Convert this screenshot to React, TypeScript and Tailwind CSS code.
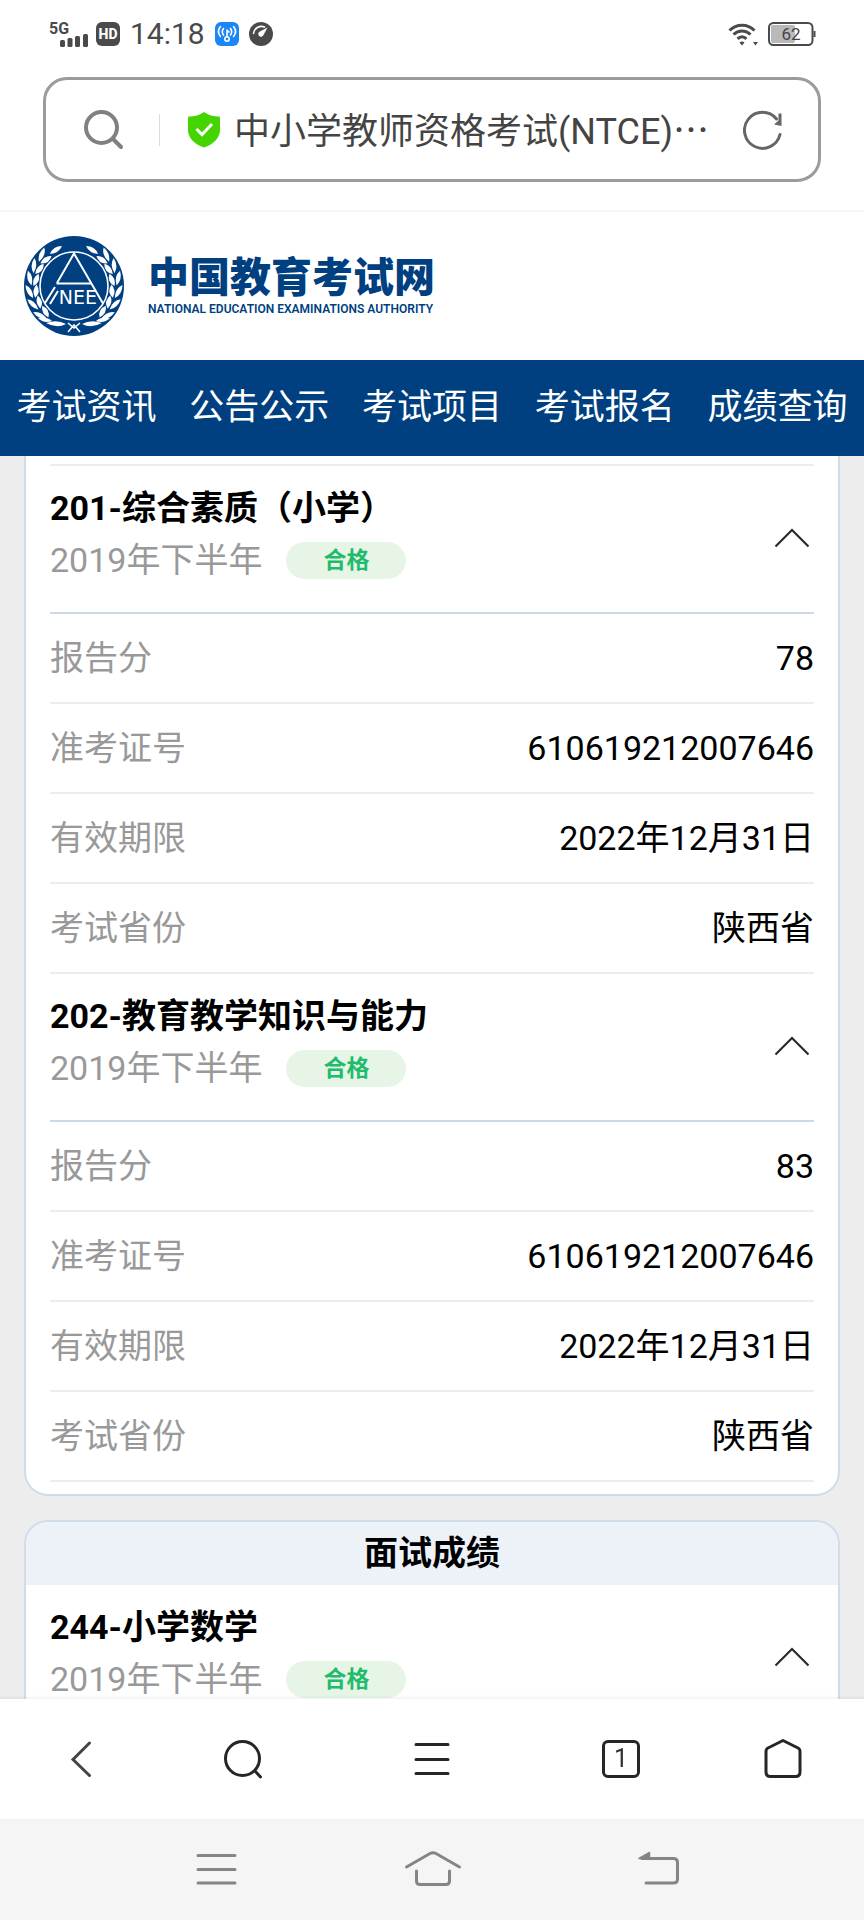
import { useState } from 'react';

interface Score {
  title: string;
  term: string;
  status: string;
  rows: { label: string; value: string }[];
}

const navItems = ['考试资讯', '公告公示', '考试项目', '考试报名', '成绩查询'];

const writtenScores: Score[] = [
  {
    title: '201-综合素质（小学）',
    term: '2019年下半年',
    status: '合格',
    rows: [
      { label: '报告分', value: '78' },
      { label: '准考证号', value: '610619212007646' },
      { label: '有效期限', value: '2022年12月31日' },
      { label: '考试省份', value: '陕西省' },
    ],
  },
  {
    title: '202-教育教学知识与能力',
    term: '2019年下半年',
    status: '合格',
    rows: [
      { label: '报告分', value: '83' },
      { label: '准考证号', value: '610619212007646' },
      { label: '有效期限', value: '2022年12月31日' },
      { label: '考试省份', value: '陕西省' },
    ],
  },
];

const interviewScores: Score[] = [
  { title: '244-小学数学', term: '2019年下半年', status: '合格', rows: [] },
];

const StatusBar = () => (
  <div className="flex h-[68px] shrink-0 items-center justify-between pl-[50px] pr-12 text-[#4a4a4a]">
    <div className="flex items-center gap-[10px]">
      <svg width="36" height="28" viewBox="0 0 36 28" className="overflow-visible" fill="currentColor">
        <text x="-1" y="14" fontSize="16" fontWeight="700" fontFamily="Roboto, sans-serif">5G</text>
        <rect x="10" y="20" width="5" height="7" rx="1.5" />
        <rect x="17.500" y="18" width="5" height="9" rx="1.5" />
        <rect x="25" y="16" width="5" height="11" rx="1.5" />
        <rect x="33" y="14" width="5" height="13" rx="1.5" />
      </svg>
      <svg width="24" height="24" viewBox="0 0 24 24">
        <rect width="24" height="24" rx="6" fill="#4a4a4a" />
        <text x="12" y="17" textAnchor="middle" fontSize="14" fontWeight="800" fontFamily="Roboto, sans-serif" fill="#fff">HD</text>
      </svg>
      <span className="text-[30px] leading-8">14:18</span>
      <svg width="24" height="24" viewBox="0 0 24 24" fill="none" stroke="#fff" strokeWidth="1.6" strokeLinecap="round">
        <rect width="24" height="24" rx="6" fill="#1b86f5" stroke="none" />
        <path d="M5.500 4.500c-2.500 3-2.500 7 0 10M18.500 4.500c2.500 3 2.500 7 0 10M8.500 6.500c-1.500 2-1.500 4.500 0 6.500M15.500 6.500c1.500 2 1.500 4.500 0 6.500M12 8v7M12 8.500l2 1.500" />
        <circle cx="12" cy="17" r="2.200" />
      </svg>
      <svg width="24" height="24" viewBox="0 0 24 24">
        <circle cx="12" cy="12" r="12" fill="#4a4a4a" />
        <path d="M4.500 11.500A8 8 0 0 1 15.500 5" fill="none" stroke="#fff" strokeWidth="1.600" strokeLinecap="round" />
        <path d="M18.500 5.500 14.500 13a2.700 2.700 0 1 1-3.600-3.400z" fill="#fff" />
      </svg>
    </div>
    <div className="flex items-center gap-[10px]">
      <svg width="30" height="24" viewBox="0 0 30 24" fill="none" stroke="currentColor" strokeWidth="3">
        <path d="M1.500 8.500C8.500 1.500 19.500 1.500 26.500 8.500M5.500 12.500c5-4.700 12-4.700 17 0M9.500 16.800c2.800-2.600 6.200-2.600 9 0" />
        <path d="M11.500 20.500c1.500-1.300 3.500-1.300 5 0L14 23.500zM25 20h5l-2.500 3.500z" fill="currentColor" stroke="none" />
      </svg>
      <svg width="48" height="24" viewBox="0 0 48 24">
        <rect x="1" y="1" width="43.500" height="22" rx="4.500" fill="none" stroke="#4a4a4a" strokeWidth="2" />
        <rect x="3" y="3" width="24" height="18" rx="2" fill="#b9b9b9" />
        <path d="M45.500 9h2v6h-2z" fill="#4a4a4a" />
        <text x="23" y="18" textAnchor="middle" fontSize="17" fontFamily="Roboto, sans-serif" fill="#444">62</text>
      </svg>
    </div>
  </div>
);

const AddressBar = () => (
  <div className="shrink-0 border-b-2 border-[#f6f6f6] px-[43px] pb-7 pt-[9px]">
    <div className="flex h-[105px] items-center rounded-[24px] border-[3px] border-[#9b9b9b] pl-[38px] pr-9">
      <button type="button" aria-label="搜索">
        <svg width="40" height="40" viewBox="0 0 40 40" fill="none" stroke="#808080" strokeWidth="4" strokeLinecap="round">
          <circle cx="17.500" cy="17.500" r="15.500" />
          <path d="M29 29l8 8" />
        </svg>
      </button>
      <span className="ml-[35px] h-8 w-px bg-[#dcdcdc]" />
      <svg className="ml-7 shrink-0" width="32" height="36" viewBox="0 0 32 36">
        <path d="M16 0c4 3 9.500 4.500 15 4.500Q32 4.500 32 6v12c0 8-7 14.500-16 17.500C7 32.500 0 26 0 18V6q0-1.500 1-1.500C6.500 4.500 12 3 16 0z" fill="#44d500" />
        <path d="M8.500 17l5.500 5.500L24 12" fill="none" stroke="#fff" strokeWidth="3" />
      </svg>
      <button type="button" className="ml-[14px] flex-1 whitespace-nowrap text-left text-[36px] leading-[52px] text-[#444]">
        中小学教师资格考试(NTCE)<span className="font-['Noto_Sans_CJK_SC']">…</span>
      </button>
      <button type="button" aria-label="刷新">
        <svg width="39" height="40" viewBox="0 0 39 40" fill="none" stroke="#666" strokeWidth="3">
          <path d="M37 24.500A18 18 0 1 1 33.500 9" strokeLinecap="round" />
          <path d="M35.500 3.500h3V16l-7.500-1.500 4.500-4z" fill="#666" stroke="none" />
        </svg>
      </button>
    </div>
  </div>
);

// one laurel branch, drawn for the left side and mirrored for the right
const Branch = () => (
  <g fill="#fff">
    {[-46, -63, -80, -97, -114, -131].map((a) => (
      <g key={a} transform={`rotate(${a} 50 50)`}>
        <path d="M43 8q5-7 14-6-4 7-14 6z" />
        <path d="M43 10q8-3 13 3-8 4-13-3z" />
      </g>
    ))}
    <path d="M26 18q3-8 12-8-3 7-12 8zM22 87q11-4 20 1-9 5-20-1zM14 82q9-2 14 3-8 3-14-3z" />
  </g>
);

const Emblem = () => (
  <svg width="100" height="100" viewBox="0 0 100 100" className="shrink-0">
    <circle cx="50" cy="50" r="50" fill="#003f80" />
    <Branch />
    <g transform="translate(100 0) scale(-1 1)">
      <Branch />
    </g>
    <circle cx="50" cy="50" r="34" fill="#003f80" stroke="#fff" strokeWidth="1.600" />
    <g fill="none" stroke="#fff" strokeWidth="2">
      <path d="M21 67 31 51M33 47 50 17.500 79 67.500M32.500 47.500H68M26 68l8-13" />
      <path d="M44 96l6-7 6 7M44 87l6 5 6-5" strokeWidth="1.500" />
    </g>
    <text x="73" y="68" textAnchor="end" fontSize="19" fontFamily="DejaVu Sans, sans-serif" fill="#fff">NEE</text>
  </svg>
);

const SiteHeader = () => (
  <header className="shrink-0">
    <a href="#" className="flex h-[148px] items-center gap-6 pl-6 text-[#003f80]">
      <Emblem />
      <span>
        <span className="block text-[41px] font-black leading-[46px]">中国教育考试网</span>
        <span className="block whitespace-nowrap text-[12px] font-semibold leading-4">
          NATIONAL EDUCATION EXAMINATIONS AUTHORITY
        </span>
      </span>
    </a>
    <nav className="grid h-24 grid-cols-5 items-center bg-[#003f80] text-center text-[35px] leading-[52px] text-white">
      {navItems.map((item) => (
        <a key={item} href="#" className="whitespace-nowrap">{item}</a>
      ))}
    </nav>
  </header>
);

const ScoreBlock = ({ score }: { score: Score }) => {
  const [open, setOpen] = useState(true);

  return (
    <section>
      <div className="flex items-center justify-between border-b-2 border-[#ccd9e5] pb-[26px] pt-4">
        <div>
          <h3 className="text-[34px] font-bold leading-[52px]">{score.title}</h3>
          <div className="flex h-[52px] items-center">
            <span className="text-[34px] text-[#999]">{score.term}</span>
            <span className="ml-6 w-[120px] rounded-full bg-[#e7f5e7] text-center text-[23px] font-bold leading-[37px] text-[#21bb6c]">
              {score.status}
            </span>
          </div>
        </div>
        <button type="button" aria-label="展开或收起" aria-expanded={open} onClick={() => setOpen(!open)} className="mr-1 pt-2">
          <svg width="36" height="20" viewBox="0 0 36 20" fill="none" stroke="#2b2b2b" strokeWidth="2.200" className={open ? '' : 'rotate-180'}>
            <path d="M1.500 18.500 18 2l16.500 16.500" />
          </svg>
        </button>
      </div>
      {open && (
        <dl>
          {score.rows.map((row) => (
            <div key={row.label} className="flex justify-between border-b-2 border-[#ececec] py-[18px] text-[34px] leading-[52px]">
              <dt className="text-[#999]">{row.label}</dt>
              <dd>{row.value}</dd>
            </div>
          ))}
        </dl>
      )}
    </section>
  );
};

const BrowserBar = () => (
  <div className="relative grid h-[120px] shrink-0 grid-cols-[3fr_3fr_4fr_3fr_3fr] place-items-center bg-white shadow-[0_-1px_4px_rgba(0,0,0,0.08)]">
    <button type="button" aria-label="后退">
      <svg width="40" height="40" viewBox="0 0 40 40" fill="none" stroke="#444" strokeWidth="3" strokeLinecap="round">
        <path d="M28.500 4 12 20.500 28.500 36.500" />
      </svg>
    </button>
    <button type="button" aria-label="搜索">
      <svg width="40" height="40" viewBox="0 0 40 40" fill="none" stroke="#262626" strokeWidth="3" strokeLinecap="round">
        <circle cx="19.500" cy="19.500" r="17" />
        <path d="M32 32l5.500 6" />
      </svg>
    </button>
    <button type="button" aria-label="菜单">
      <svg width="40" height="40" viewBox="0 0 40 40" stroke="#262626" strokeWidth="3" strokeLinecap="round">
        <path d="M4 5.500h32M4 20.500h32M4 34.500h32" />
      </svg>
    </button>
    <button type="button" aria-label="标签页" className="h-[38px] w-[38px] rounded-md border-[3px] border-[#262626] text-[25px] leading-8 text-[#333]">
      1
    </button>
    <button type="button" aria-label="主页">
      <svg width="40" height="40" viewBox="0 0 40 40" fill="none" stroke="#262626" strokeWidth="3" strokeLinejoin="round">
        <path d="M20 1.500 35 9q2 1 2 3.500V33q0 4.500-4.500 4.500h-25Q3 37.500 3 33V12.500Q3 10 5 9z" />
      </svg>
    </button>
  </div>
);

const SystemNav = () => (
  <div className="grid h-[101px] shrink-0 grid-cols-3 place-items-center bg-[#f5f5f5] px-[108px]">
    <button type="button" aria-label="最近任务">
      <svg width="64" height="40" viewBox="0 0 64 40" stroke="#858585" strokeWidth="3" strokeLinecap="round">
        <path d="M14 5.500h37M14 19.500h37M14 33h37" />
      </svg>
    </button>
    <button type="button" aria-label="桌面">
      <svg width="64" height="40" viewBox="0 0 64 40" fill="none" stroke="#858585" strokeWidth="3" strokeLinecap="round">
        <path d="M6.500 17 30 3.500q3-1.500 6 0L59.500 17M16.500 21v10q0 3.500 3.500 3.500h26q3.500 0 3.500-3.500V21" />
      </svg>
    </button>
    <button type="button" aria-label="返回">
      <svg width="64" height="40" viewBox="0 0 64 40" fill="none" stroke="#858585" strokeWidth="3" strokeLinecap="round">
        <path d="M26 8.500h31.500q4 0 4 4V29q0 4-4 4H30" />
        <path d="M23 8.500 33.500 2.500v6z" fill="#858585" strokeWidth="1.500" strokeLinejoin="round" />
      </svg>
    </button>
  </div>
);

const App = () => {
  return (
    <div lang="zh-CN" className="flex h-screen flex-col bg-white font-['Roboto','Noto_Sans_CJK_SC',sans-serif] text-black">
      <StatusBar />
      <AddressBar />
      <SiteHeader />

      <main className="min-h-0 flex-1 overflow-y-auto bg-[#ededed] px-6 [scrollbar-width:none]">
        <div className="rounded-b-[24px] border-2 border-t-0 border-[#d0dde9] bg-white px-6 pb-3 pt-2">
          <div className="h-[2px] bg-[#ececec]" />
          {writtenScores.map((score) => (
            <ScoreBlock key={score.title} score={score} />
          ))}
        </div>

        <div className="mt-6 overflow-hidden rounded-t-[24px] border-2 border-b-0 border-[#d0dde9] bg-white">
          <h2 className="bg-[#edf2f9] text-center text-[34px] font-bold leading-[63px]">面试成绩</h2>
          <div className="px-6">
            {interviewScores.map((score) => (
              <ScoreBlock key={score.title} score={score} />
            ))}
          </div>
        </div>
      </main>

      <BrowserBar />
      <SystemNav />
    </div>
  );
};

export default App;
